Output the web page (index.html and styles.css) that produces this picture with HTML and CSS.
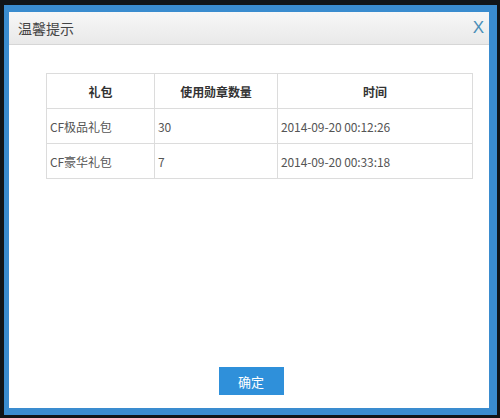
FILE: index.html
```html
<!DOCTYPE html>
<html lang="zh-CN">
<head>
    <meta charset="UTF-8">
    <title>温馨提示</title>
    <link rel="stylesheet" href="styles.css">
</head>
<body>
    <div class="dialog">
        <div class="dialog_head">
            <span class="dialog_title">温馨提示</span>
            <span class="dialog_close">X</span>
        </div>
        <div class="dialog_body">
            <table class="gift_table">
                <tr>
                    <th class="col1">礼包</th>
                    <th class="col2">使用勋章数量</th>
                    <th>时间</th>
                </tr>
                <tr>
                    <td>CF极品礼包</td>
                    <td>30</td>
                    <td>2014-09-20 00:12:26</td>
                </tr>
                <tr>
                    <td>CF豪华礼包</td>
                    <td>7</td>
                    <td>2014-09-20 00:33:18</td>
                </tr>
            </table>
            <button class="btn_ok">确定</button>
        </div>
    </div>
</body>
</html>
```

FILE: styles.css
```css
html, body {
    margin: 0;
    height: 100%;
}
body {
    background-color: #111518;
    font-family: "Noto Sans CJK SC", "Liberation Sans", sans-serif;
    padding: 5px 3px 3px 4px;
    box-sizing: border-box;
}
.dialog {
    height: 410px;
    box-sizing: border-box;
    border-style: solid;
    border-color: #3a8ccf;
    border-width: 7px 8px 7px 5px;
    background-color: #fff;
    display: flex;
    flex-direction: column;
}
.dialog_head {
    height: 32px;
    border-bottom: 1px solid #d6d6d6;
    background: linear-gradient(#f7f7f7, #e9e9e9);
    display: flex;
    align-items: center;
    justify-content: space-between;
    padding: 0 5px 0 9px;
}
.dialog_title {
    font-size: 14px;
    color: #444;
}
.dialog_close {
    font-family: "Liberation Sans", sans-serif;
    font-size: 17px;
    color: #4a8fb8;
}
.dialog_body {
    flex: 1;
    display: flex;
    flex-direction: column;
    align-items: center;
    padding: 28px 0 13px 0;
}
.gift_table {
    width: 427px;
    align-self: flex-start;
    margin-left: 37px;
    border-collapse: collapse;
    font-size: 12px;
    color: #555;
}
.gift_table th,
.gift_table td {
    border: 1px solid #dcdcdc;
    height: 34px;
    padding: 0 0 0 3px;
    text-align: left;
    letter-spacing: -0.1px;
}
.gift_table th {
    text-align: center;
    color: #333;
    padding: 0;
}
.col1 {
    width: 107px;
}
.col2 {
    width: 122px;
}
.btn_ok {
    margin-top: auto;
    margin-left: 4px;
    width: 65px;
    height: 28px;
    border: none;
    background-color: #2f90da;
    color: #fff;
    font-family: "Noto Sans CJK SC", sans-serif;
    font-size: 13px;
    cursor: pointer;
}
```
